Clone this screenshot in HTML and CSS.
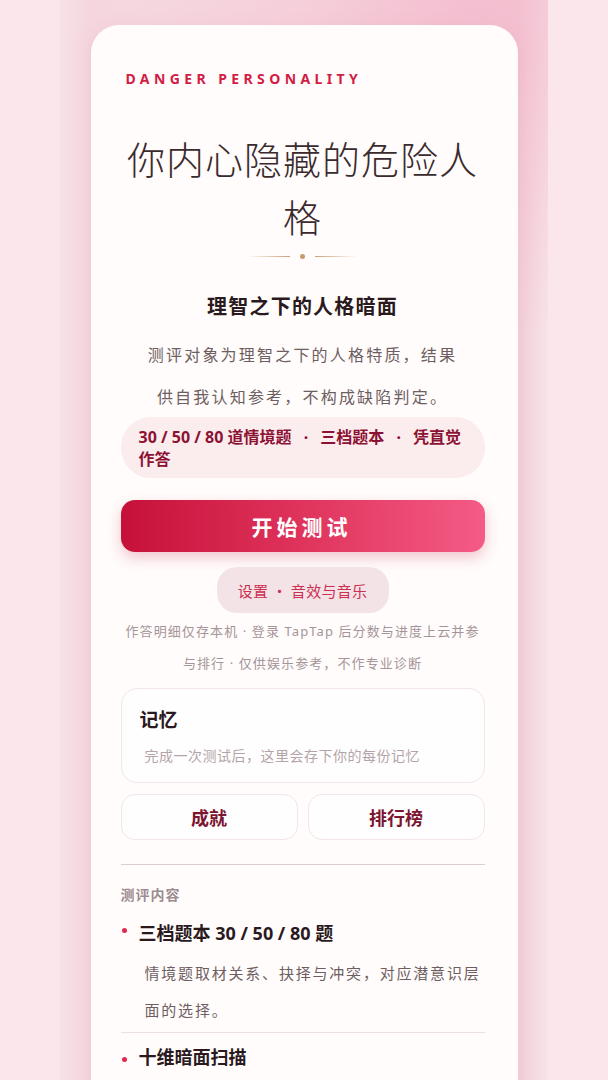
FILE: index.html
```html
<!DOCTYPE html>
<html lang="zh-CN">
<head>
<meta charset="utf-8">
<title>你内心隐藏的危险人格</title>
<link rel="stylesheet" href="styles.css">
</head>
<body>
<div class="shell">
  <main class="card">
    <div class="eyebrow">DANGER PERSONALITY</div>
    <h1 class="title">你内心隐藏的危险人格</h1>
    <div class="divider"><span class="rule rule-l"></span><span class="dot"></span><span class="rule rule-r"></span></div>
    <h2 class="subtitle">理智之下的人格暗面</h2>
    <p class="desc">测评对象为理智之下的人格特质，结果供自我认知参考，不构成缺陷判定。</p>
    <div class="pill">30 / 50 / 80 道情境题 &ensp;·&ensp; 三档题本 &ensp;·&ensp; 凭直觉作答</div>
    <button class="start">开始测试</button>
    <div class="settings-wrap"><button class="settings">设置 · 音效与音乐</button></div>
    <p class="note">作答明细仅存本机 · 登录 TapTap 后分数与进度上云并参与排行 · 仅供娱乐参考，不作专业诊断</p>
    <section class="memory">
      <h3 class="memory-title">记忆</h3>
      <p class="memory-sub">完成一次测试后，这里会存下你的每份记忆</p>
    </section>
    <div class="duo">
      <button class="ghost">成就</button>
      <button class="ghost">排行榜</button>
    </div>
    <hr class="sep">
    <div class="section-label">测评内容</div>
    <ul class="items">
      <li class="item">
        <div class="item-title">三档题本 30 / 50 / 80 题</div>
        <p class="item-desc">情境题取材关系、抉择与冲突，对应潜意识层面的选择。</p>
      </li>
      <li class="item">
        <div class="item-title">十维暗面扫描</div>
      </li>
    </ul>
  </main>
</div>
</body>
</html>
```

FILE: styles.css
```css
* { box-sizing: border-box; }
html, body { margin: 0; padding: 0; }
body {
  background: #fbe7eb;
  font-family: "Noto Sans", "Noto Sans CJK SC", sans-serif;
  color: #2e1e22;
  height: 1080px;
  overflow: hidden;
}
.shell {
  width: 488px;
  margin: 0 auto;
  min-height: 1080px;
  padding-top: 25px;
  background:
    radial-gradient(ellipse 70% 30% at 85% 0%, rgba(244, 178, 200, 0.6), rgba(244, 178, 200, 0) 100%),
    linear-gradient(90deg, #f7e1e6 0%, #f5d6de 6%, #f6dbe2 50%, #f3d0da 94%, #f7e3e8 100%);
  background-color: #f6dde3;
}
.card {
  width: 427px;
  margin: 0 auto;
  background: #fffcfb;
  border-radius: 28px;
  padding: 45px 33px 40px 30px;
  min-height: 1100px;
  box-shadow: 0 4px 20px rgba(220, 140, 160, 0.18);
}
.eyebrow {
  padding-left: 5px;
  font-size: 14px;
  line-height: 17px;
  font-weight: 700;
  letter-spacing: 4.4px;
  color: #d21d45;
}
.title {
  margin: 42px 0 0;
  text-align: center;
  font-family: "Noto Sans CJK SC", sans-serif;
  font-weight: 300;
  font-size: 38px;
  line-height: 58px;
  letter-spacing: 1px;
  color: #3a2a2e;
}
.divider {
  display: flex;
  align-items: center;
  justify-content: center;
  gap: 10px;
  margin-top: 7px;
  height: 8px;
}
.rule { width: 42px; height: 1px; }
.rule-l { background: linear-gradient(90deg, rgba(201, 160, 118, 0), #c9a076); }
.rule-r { background: linear-gradient(90deg, #c9a076, rgba(201, 160, 118, 0)); }
.dot { width: 5px; height: 5px; border-radius: 50%; background: #c79a72; }
.subtitle {
  margin: 32px 0 0;
  text-align: center;
  font-family: "Noto Sans CJK SC", sans-serif;
  font-size: 20px;
  line-height: 28px;
  font-weight: 700;
  letter-spacing: 1.2px;
  color: #2a1a1e;
}
.desc {
  max-width: 318px;
  margin: 13px auto 0;
  text-align: center;
  font-family: "Noto Sans CJK SC", sans-serif;
  font-size: 16px;
  line-height: 42px;
  letter-spacing: 2.2px;
  color: #6e5e62;
}
.pill {
  margin-top: 0;
  background: #fbecee;
  border-radius: 30px;
  padding: 9px 14px 8px 18px;
  font-family: "Noto Sans", "Noto Sans CJK SC", sans-serif;
  font-size: 16px;
  line-height: 22px;
  font-weight: 700;
  color: #8c1233;
}
.start {
  display: block;
  width: 100%;
  height: 52px;
  margin-top: 22px;
  border: 0;
  border-radius: 14px;
  background: linear-gradient(90deg, #c5113a 0%, #dd3058 45%, #f45b86 100%);
  color: #fff;
  font-family: "Noto Sans CJK SC", sans-serif;
  font-size: 21px;
  font-weight: 700;
  letter-spacing: 4px;
  padding-left: 4px;
  box-shadow: 0 6px 14px rgba(210, 60, 95, 0.28);
}
.settings-wrap { display: flex; justify-content: center; margin-top: 15px; }
.settings {
  width: 172px;
  height: 46px;
  border: 0;
  border-radius: 20px;
  background: #f3e3e6;
  color: #cc2f52;
  font-family: "Noto Sans CJK SC", sans-serif;
  font-size: 15px;
  letter-spacing: 0.3px;
}
.note {
  margin: 2px 0 0;
  text-align: center;
  font-family: "Noto Sans", "Noto Sans CJK SC", sans-serif;
  font-size: 13px;
  line-height: 32px;
  letter-spacing: 1.1px;
  color: #a5959a;
}
.memory {
  margin-top: 9px;
  height: 95px;
  border: 1px solid #f1e6e8;
  border-radius: 16px;
  background: #fffefe;
  padding: 16px 18px;
}
.memory-title {
  margin: 0;
  font-family: "Noto Sans CJK SC", sans-serif;
  font-size: 19px;
  line-height: 28px;
  font-weight: 700;
  color: #2a1a1e;
}
.memory-sub {
  margin: 12px 0 0 5px;
  font-family: "Noto Sans CJK SC", sans-serif;
  font-size: 14px;
  line-height: 20px;
  letter-spacing: 0.5px;
  color: #b4a4a9;
}
.duo {
  display: grid;
  grid-template-columns: 1fr 1fr;
  gap: 10px;
  margin-top: 11px;
}
.ghost {
  height: 46px;
  border: 1px solid #f1e6e8;
  border-radius: 14px;
  background: #fffefe;
  color: #7c1531;
  font-family: "Noto Sans CJK SC", sans-serif;
  font-size: 18px;
  font-weight: 700;
}
.sep {
  margin: 24px 0 0;
  border: 0;
  height: 1px;
  background: #ddcdd1;
}
.section-label {
  margin-top: 19px;
  font-family: "Noto Sans CJK SC", sans-serif;
  font-size: 14px;
  line-height: 20px;
  font-weight: 700;
  letter-spacing: 1px;
  color: #9c8c90;
}
.items { list-style: none; margin: 0; padding: 0; }
.item { position: relative; padding-left: 18px; }
.item + .item { border-top: 1px solid #ece0e2; }
.item::before {
  content: "";
  position: absolute;
  left: 1px;
  top: 24px;
  width: 5px;
  height: 5px;
  border-radius: 50%;
  background: #e0294f;
}
.item-title {
  padding-top: 16px;
  font-family: "Noto Sans", "Noto Sans CJK SC", sans-serif;
  font-size: 18px;
  line-height: 26px;
  font-weight: 700;
  color: #2a1a1e;
}
.item + .item .item-title { padding-top: 11px; }
.item-desc {
  margin: 8px 0 0 6px;
  padding-bottom: 4px;
  font-family: "Noto Sans CJK SC", sans-serif;
  font-size: 15px;
  line-height: 37px;
  letter-spacing: 1.8px;
  color: #6e5e62;
}
```
